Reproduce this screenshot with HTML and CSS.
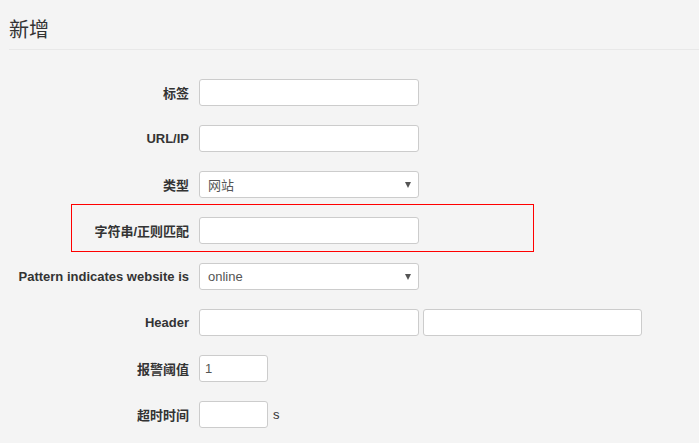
FILE: index.html
```html
<!DOCTYPE html>
<html>
<head>
<meta charset="utf-8">
<link rel="stylesheet" href="styles.css">
</head>
<body>
<div class="page">
  <h2 class="title">新增</h2>
  <form class="form">
    <div class="row">
      <label class="label">标签</label>
      <input class="input" type="text">
    </div>
    <div class="row">
      <label class="label">URL/IP</label>
      <input class="input" type="text">
    </div>
    <div class="row">
      <label class="label">类型</label>
      <div class="select"><span>网站</span><i class="caret"></i></div>
    </div>
    <div class="row row-marked">
      <label class="label">字符串/正则匹配</label>
      <input class="input" type="text">
    </div>
    <div class="row">
      <label class="label">Pattern indicates website is</label>
      <div class="select"><span>online</span><i class="caret"></i></div>
    </div>
    <div class="row">
      <label class="label">Header</label>
      <input class="input" type="text">
      <input class="input input-second" type="text">
    </div>
    <div class="row">
      <label class="label">报警阈值</label>
      <input class="input input-small" type="text" value="1">
    </div>
    <div class="row">
      <label class="label">超时时间</label>
      <input class="input input-small" type="text">
      <span class="unit">s</span>
    </div>
  </form>
</div>
</body>
</html>
```

FILE: styles.css
```css
html, body {
  margin: 0;
  padding: 0;
  background: #f4f4f4;
}
body {
  font-family: "Liberation Sans", Arial, "Noto Sans CJK SC", sans-serif;
  color: #333;
  font-size: 13px;
}
.page {
  width: 699px;
  height: 443px;
  overflow: hidden;
}
.title {
  margin: 0 0 0 9px;
  padding: 17px 0 8px 0;
  font-size: 20px;
  line-height: 24px;
  font-weight: normal;
  color: #333;
  font-family: "Noto Sans CJK SC", sans-serif;
  border-bottom: 1px solid #e8e8e8;
}
.form {
  padding-top: 29px;
}
.row {
  display: flex;
  align-items: center;
  height: 27px;
  margin-bottom: 19px;
  position: relative;
}
.row-marked::before {
  content: "";
  position: absolute;
  left: 71px;
  top: -13px;
  width: 461px;
  height: 46px;
  border: 1px solid #f00;
  pointer-events: none;
}
.label {
  width: 189px;
  flex: none;
  text-align: right;
  font-weight: bold;
  color: #333;
  font-size: 13px;
  margin-right: 10px;
}
.input {
  box-sizing: border-box;
  width: 220px;
  height: 27px;
  border: 1px solid #ccc;
  border-radius: 3px;
  background: #fff;
  padding: 0 5px;
  margin: 0;
  font-family: "Liberation Sans", Arial, sans-serif;
  font-size: 13px;
  color: #555;
  outline: none;
}
.input-second {
  margin-left: 4px;
  width: 219px;
}
.input-small {
  width: 69px;
}
.select {
  box-sizing: border-box;
  width: 220px;
  height: 27px;
  border: 1px solid #ccc;
  border-radius: 3px;
  background: #fff;
  display: flex;
  align-items: center;
  justify-content: space-between;
  padding: 0 7px 0 8px;
  color: #555;
  font-size: 13px;
  font-family: "Liberation Sans", Arial, "Noto Sans CJK SC", sans-serif;
}
.caret {
  width: 0;
  height: 0;
  border-left: 3.5px solid transparent;
  border-right: 3.5px solid transparent;
  border-top: 6px solid #555;
}
.unit {
  margin-left: 5px;
  color: #333;
  font-size: 13px;
}
```
